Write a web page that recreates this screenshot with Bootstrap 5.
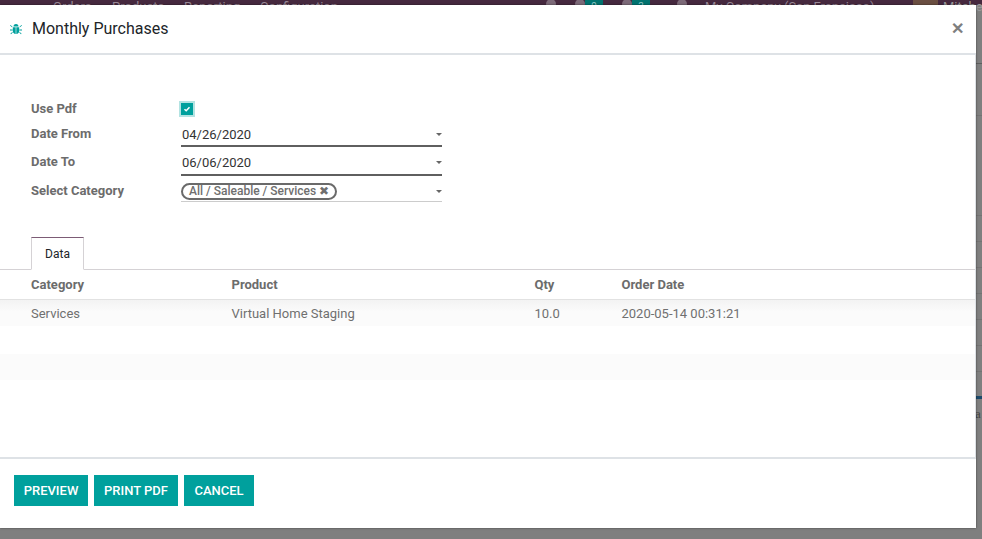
<!DOCTYPE html>
<html lang="en">
<head>
    <meta charset="UTF-8">
    <meta name="viewport" content="width=device-width, initial-scale=1.0">
    <title>Monthly Purchases</title>
    <link rel="stylesheet" href="https://cdn.jsdelivr.net/npm/bootstrap@5.3.0/dist/css/bootstrap.min.css">
    <style>
        html, body { height: 539px; overflow: hidden; }
        body { background: #7f7f7f; font-family: Roboto, sans-serif; font-size: 13px; color: #6c6c6c; }

        /* app bar behind the dialog, only its lower edge shows */
        .top-strip { display: flow-root; height: 5px; background: #46293f; color: #9a8a97; line-height: 16px; padding-left: 53px; white-space: nowrap; }
        .top-strip-inner { display: flex; margin-top: -1px; height: 16px; }
        .top-strip-inner > span { flex: none; }
        .strip-orders { width: 59px; } .strip-products { width: 72px; } .strip-reporting { width: 76px; } .strip-config { width: 286px; }
        .strip-icon { width: 10px; height: 10px; background: #7d6a79; border-radius: 50%; }
        .strip-i1 { margin-right: 19px; }
        .strip-badge { width: 18px; background: #00736f; color: #8fc7c5; font-size: 10px; text-align: center; }
        .strip-gap1 { margin-right: 19px; } .strip-gap2 { margin-right: 27px; } .strip-gap3 { margin-right: 18px; }
        .strip-company { width: 208px; } .strip-avatar { width: 25px; height: 10px; background: #6b4f42; margin-right: 5px; }
        .strip-user { color: #9a9a9a; }

        .page-row { display: flex; height: 523px; }
        .dialog-box { position: relative; z-index: 2; width: 976px; flex: none; height: 523px; background: #fff; display: flex; flex-direction: column; box-shadow: 0 0 2px rgba(0,0,0,.5); }
        .dialog-head { height: 50px; border-bottom: 2px solid #dee2e6; padding: 0 10px 1px; flex: none; }
        .dialog-title { font-size: 16px; font-weight: 400; color: #212529; line-height: 20px; margin: 0 0 0 10px; }
        .dialog-close { font-size: 16px; color: #7f7f7f; margin-left: auto; margin-right: 2px; line-height: 16px; }
        .dialog-main { flex: 1 1 auto; padding-top: 46px; border-right: 1px solid #dee2e6; }

        .form-rows { padding-left: 31px; }
        .form-row-item { display: flex; }
        .row-pdf { height: 25px; } .row-from { height: 28px; } .row-to { height: 29px; } .row-cat { height: 19px; }
        .form-label-cell { width: 150px; font-weight: 700; flex: none; line-height: 16px; }
        .form-value { width: 261px; position: relative; color: #333; padding-left: 1px; line-height: 20px; margin-top: -2px; padding-top: 1px; border-bottom: 2px solid #5f5f5f; }
        .value-from { height: 23px; } .value-to { height: 24px; }
        .value-cat { height: 19px; margin-top: 0; padding: 0; border-bottom: 1px solid #ccc; line-height: 16px; }
        .caret-mark { position: absolute; right: 0; top: 9px; border-top: 3px solid #666; border-left: 3px solid transparent; border-right: 3px solid transparent; }
        .value-cat .caret-mark { top: 7px; }
        .check-box { width: 12px; height: 12px; margin-top: 2px; background: #00a09d; outline: 2px solid #b3e3e2; display: flex; align-items: center; justify-content: center; }
        .tag-pill { display: inline-block; border: 2px solid #6a6a6a; border-radius: 10px; font-weight: 500; font-size: 12px; color: #6f6f6f; line-height: 13px; padding: 0 6px; height: 17px; }

        .tab-row { margin-top: 35px; padding-left: 31px; border-bottom: 1px solid #d5d2d5; height: 33px; }
        .tab-item { display: inline-block; height: 33px; width: 53px; text-align: center; border: 1px solid #d5d2d5; border-top-color: #7c5b75; border-bottom: 1px solid #fff; color: #212529; font-size: 12px; line-height: 32px; }
        .data-grid { display: grid; grid-template-columns: 200.5px 303px 87px 1fr; padding-left: 31px; }
        .grid-head { height: 30px; line-height: 29px; font-weight: 700; border-bottom: 1px solid #e2e2e2; }
        .grid-line { height: 26px; line-height: 27px; color: #707070; }
        .grid-first { background: linear-gradient(#f3f3f3, #fbfbfb 45%); }
        .grid-blank { height: 28px; }
        .grid-shade { background: #fbfbfb; }

        .dialog-foot { height: 71px; border-top: 2px solid #dee2e6; flex: none; padding: 16px 14px; gap: 6px; }
        .act-btn { background: #00a09d; color: #fff; border-radius: 0; border: 0; height: 31px; font-size: 13px; font-weight: 500; padding: 0; line-height: 31px; }
        .act-btn:hover { background: #00a09d; color: #fff; }
        .btn-w1 { width: 74px; } .btn-w2 { width: 84px; } .btn-w3 { width: 70px; }

        /* sliver of the page still visible right of the dialog */
        .side-sliver { flex: 1 1 auto; overflow: hidden; white-space: nowrap; }
        .sliver-gap { border-bottom: 1px solid #737373; }
        .sliver-a { height: 59px; border-bottom-color: #5e5e5e; } .sliver-b { height: 52px; } .sliver-c { height: 100px; } .sliver-row { height: 26px; }
        .sliver-dash { height: 3px; background: #1c4a6b; margin-top: 24px; }
        .sliver-text { color: #444; font-family: "Liberation Serif", serif; line-height: 14px; margin-top: 8px; margin-left: -1px; }
    </style>
</head>
<body>
    <div class="top-strip">
        <div class="top-strip-inner">
            <span class="strip-orders">Orders</span>
            <span class="strip-products">Products</span>
            <span class="strip-reporting">Reporting</span>
            <span class="strip-config">Configuration</span>
            <span class="strip-icon strip-i1"></span>
            <span class="strip-icon"></span>
            <span class="strip-badge strip-gap1">9</span>
            <span class="strip-icon"></span>
            <span class="strip-badge strip-gap2">3</span>
            <span class="strip-icon strip-gap3"></span>
            <span class="strip-company">My Company (San Francisco)</span>
            <span class="strip-avatar"></span>
            <span class="strip-user">Mitche</span>
        </div>
    </div>
    <div class="page-row">
        <div class="dialog-box">
            <div class="dialog-head d-flex align-items-center">
                <svg width="12" height="12" viewBox="0 0 12 12" fill="#00a09d"><path d="M3.500 3.500a2.500 2.500 0 0 1 5 0zM2.800 4.200h2.900V11C4 11 2.800 9.600 2.800 8zM6.300 4.200h2.900V8c0 1.600-1.200 3-2.900 3zM.5 2l2 1.800-.5.500-2-1.800zM11.500 2l-2 1.800.5.500 2-1.800zM0 6.500h2.500v1H0zM9.500 6.500H12v1H9.500zM2.200 9l.6.6L1 11.300l-.6-.6zM9.800 9l-.6.6 1.800 1.700.6-.6z"/></svg>
                <h5 class="dialog-title">Monthly Purchases</h5>
                <div class="dialog-close fw-bold">✕</div>
            </div>
            <div class="dialog-main">
                <div class="form-rows">
                    <div class="form-row-item row-pdf">
                        <div class="form-label-cell">Use Pdf</div>
                        <div class="check-box"><svg width="8" height="8" viewBox="0 0 8 8"><path d="M1.500 4.200 3.200 5.800 6.500 2.200" fill="none" stroke="#fff" stroke-width="1.500"/></svg></div>
                    </div>
                    <div class="form-row-item row-from">
                        <div class="form-label-cell">Date From</div>
                        <div class="form-value value-from">04/26/2020<i class="caret-mark"></i></div>
                    </div>
                    <div class="form-row-item row-to">
                        <div class="form-label-cell">Date To</div>
                        <div class="form-value value-to">06/06/2020<i class="caret-mark"></i></div>
                    </div>
                    <div class="form-row-item row-cat">
                        <div class="form-label-cell">Select Category</div>
                        <div class="form-value value-cat"><span class="tag-pill">All / Saleable / Services ✖</span><i class="caret-mark"></i></div>
                    </div>
                </div>
                <div class="tab-row"><span class="tab-item">Data</span></div>
                <div class="data-grid grid-head">
                    <div>Category</div><div>Product</div><div>Qty</div><div>Order Date</div>
                </div>
                <div class="data-grid grid-line grid-first">
                    <div>Services</div><div>Virtual Home Staging</div><div>10.0</div><div>2020-05-14 00:31:21</div>
                </div>
                <div class="grid-line grid-blank"></div>
                <div class="grid-line grid-shade"></div>
            </div>
            <div class="dialog-foot d-flex">
                <button class="btn act-btn btn-w1">PREVIEW</button>
                <button class="btn act-btn btn-w2">PRINT PDF</button>
                <button class="btn act-btn btn-w3">CANCEL</button>
            </div>
        </div>
        <div class="side-sliver">
            <div class="sliver-gap sliver-a"></div>
            <div class="sliver-gap sliver-b"></div>
            <div class="sliver-gap sliver-c"></div>
            <div class="sliver-gap sliver-row"></div>
            <div class="sliver-gap sliver-row"></div>
            <div class="sliver-gap sliver-row"></div>
            <div class="sliver-gap sliver-row"></div>
            <div class="sliver-gap sliver-row"></div>
            <div class="sliver-gap sliver-row"></div>
            <div class="sliver-dash"></div>
            <div class="sliver-text">a</div>
        </div>
    </div>
    <script src="https://cdn.jsdelivr.net/npm/bootstrap@5.3.0/dist/js/bootstrap.bundle.min.js"></script>
</body>
</html>
